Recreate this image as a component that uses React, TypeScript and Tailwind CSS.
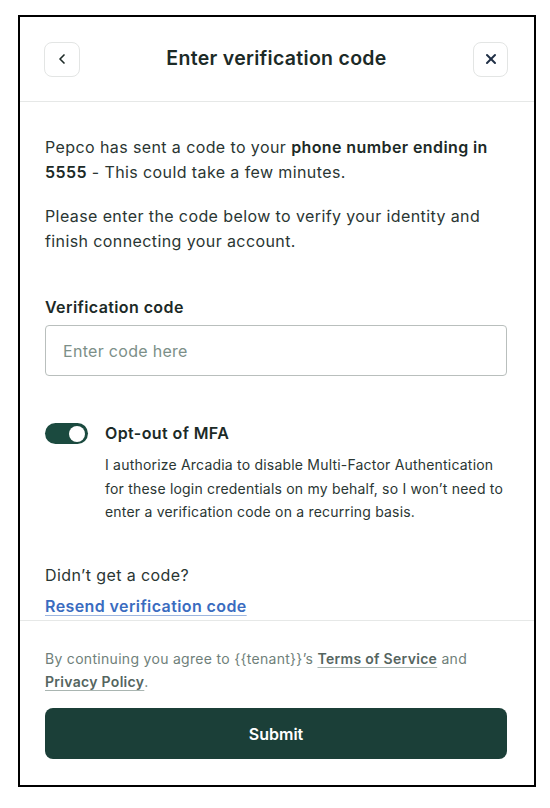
import { ChevronLeft, X } from "lucide-react";

export default function App() {
  return (
    <div
      className="min-h-screen bg-white pl-[18px] pt-[15px]"
      style={{ fontFamily: "Inter, 'Noto Sans', sans-serif" }}
    >
      <div className="flex h-[772px] w-[518px] flex-col border-2 border-black bg-white text-[#1e2b28]">
        {/* header */}
        <div className="flex h-[85px] shrink-0 items-center justify-between border-b border-[#e6e8e7] pl-[24px] pr-[26px]">
          <button className="flex h-[35px] w-[36px] items-center justify-center rounded-lg border border-[#e3e5e4] text-[#1e2b28]">
            <ChevronLeft className="h-4 w-4" strokeWidth={2.5} />
          </button>
          <h1 className="text-[19.5px] font-semibold tracking-[0.3px] text-[#1c2a27]">
            Enter verification code
          </h1>
          <button className="flex h-[35px] w-[35px] items-center justify-center rounded-lg border border-[#e3e5e4] text-[#1f2f45]">
            <X className="h-4 w-4" strokeWidth={3} />
          </button>
        </div>

        {/* body */}
        <div className="flex flex-1 flex-col pl-[25px] pr-[27px] pt-[33px] tracking-[0.4px]">
          <p className="text-[16px] leading-[25px] text-[#2a3633]">
            Pepco has sent a code to your{" "}
            <span className="font-semibold text-[#1c2a27]">phone number ending in 5555</span>{" "}
            - This could take a few minutes.
          </p>
          <p className="mt-[19px] text-[16px] leading-[25px] text-[#2a3633]">
            Please enter the code below to verify your identity and finish connecting your account.
          </p>

          <label className="mt-[41px] text-[16px] font-semibold leading-[24px] text-[#1c2a27]">
            Verification code
          </label>
          <input
            className="mt-[6px] h-[51px] w-full rounded-[4px] border border-[#b9bfbd] px-[17px] text-[16px] tracking-[0.3px] text-[#1e2b28] outline-none placeholder:text-[#7c8f88]"
            placeholder="Enter code here"
          />

          <div className="mt-[45px] flex gap-[17px]">
            <div className="mt-[2px] flex h-[21px] w-[43px] shrink-0 items-center justify-end rounded-full bg-[#1b4a3f] px-[3px]">
              <div className="h-[16px] w-[16px] rounded-full bg-white" />
            </div>
            <div className="flex flex-col">
              <span className="text-[16px] font-semibold leading-[24px] text-[#1c2a27]">
                Opt-out of MFA
              </span>
              <p className="mt-[8px] text-[14px] leading-[23.5px] tracking-[0.2px] text-[#2a3633]">
                I authorize Arcadia to disable Multi-Factor Authentication for these login credentials on my behalf, so I won’t need to enter a verification code on a recurring basis.
              </p>
            </div>
          </div>

          <p className="mt-[39px] text-[16px] leading-[24px] text-[#2a3633]">Didn’t get a code?</p>
          <a
            href="#"
            className="mt-[7px] self-start text-[16px] font-semibold leading-[24px] text-[#3a6cc0] underline decoration-[#9db6e0] underline-offset-[3px]"
          >
            Resend verification code
          </a>
        </div>

        {/* footer */}
        <div className="border-t border-[#e6e8e7] pb-[26px] pl-[25px] pr-[27px] pt-[26px]">
          <p className="text-[14px] leading-[23px] tracking-[0.3px] text-[#6f7f7a]">
            By continuing you agree to {"{{tenant}}"}’s{" "}
            <a href="#" className="font-semibold text-[#55655f] underline decoration-[#a9b5b1] underline-offset-[3px]">
              Terms of Service
            </a>{" "}
            and{" "}
            <a href="#" className="font-semibold text-[#55655f] underline decoration-[#a9b5b1] underline-offset-[3px]">
              Privacy Policy
            </a>
            .
          </p>
          <button className="mt-[15px] flex h-[51px] w-full items-center justify-center rounded-lg bg-[#1b3f38] text-[16px] font-semibold text-white">
            Submit
          </button>
        </div>
      </div>
    </div>
  );
}
